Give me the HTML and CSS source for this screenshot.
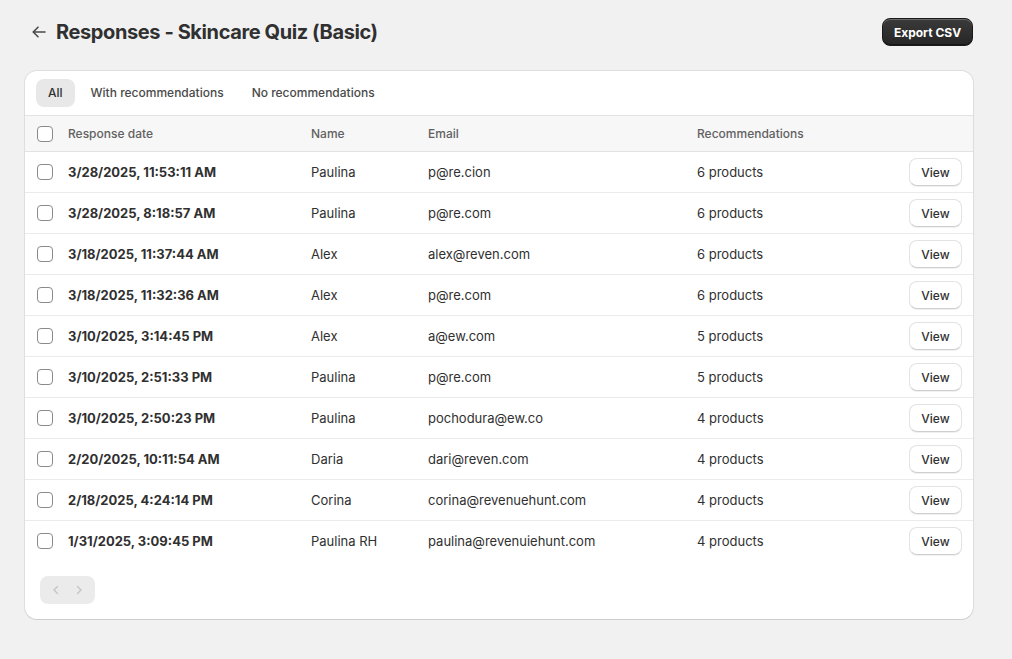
FILE: index.html
```html
<!DOCTYPE html>
<html>
<head>
<meta charset="utf-8">
<link rel="stylesheet" href="styles.css">
</head>
<body>
<div class="page">
  <div class="header">
    <div class="title-wrap">
      <button class="back" aria-label="Back">
        <svg width="20" height="20" viewBox="0 0 20 20"><path d="M16 10H4.5M9 5.2 4.2 10 9 14.8" fill="none" stroke="#4a4a4a" stroke-width="1.6" stroke-linecap="round" stroke-linejoin="round"/></svg>
      </button>
      <h1>Responses - Skincare Quiz (Basic)</h1>
    </div>
    <button class="primary">Export CSV</button>
  </div>

  <div class="card">
    <div class="tabs">
      <span class="tab active">All</span>
      <span class="tab">With recommendations</span>
      <span class="tab">No recommendations</span>
    </div>
    <div class="table">
      <div class="row head">
        <span class="cb"></span><span>Response date</span><span>Name</span><span>Email</span><span>Recommendations</span><span></span>
      </div>
      <div class="row"><span class="cb"></span><span class="date">3/28/2025, 11:53:11 AM</span><span>Paulina</span><span>p@re.cion</span><span>6 products</span><span class="act"><button class="view">View</button></span></div>
      <div class="row"><span class="cb"></span><span class="date">3/28/2025, 8:18:57 AM</span><span>Paulina</span><span>p@re.com</span><span>6 products</span><span class="act"><button class="view">View</button></span></div>
      <div class="row"><span class="cb"></span><span class="date">3/18/2025, 11:37:44 AM</span><span>Alex</span><span>alex@reven.com</span><span>6 products</span><span class="act"><button class="view">View</button></span></div>
      <div class="row"><span class="cb"></span><span class="date">3/18/2025, 11:32:36 AM</span><span>Alex</span><span>p@re.com</span><span>6 products</span><span class="act"><button class="view">View</button></span></div>
      <div class="row"><span class="cb"></span><span class="date">3/10/2025, 3:14:45 PM</span><span>Alex</span><span>a@ew.com</span><span>5 products</span><span class="act"><button class="view">View</button></span></div>
      <div class="row"><span class="cb"></span><span class="date">3/10/2025, 2:51:33 PM</span><span>Paulina</span><span>p@re.com</span><span>5 products</span><span class="act"><button class="view">View</button></span></div>
      <div class="row"><span class="cb"></span><span class="date">3/10/2025, 2:50:23 PM</span><span>Paulina</span><span>pochodura@ew.co</span><span>4 products</span><span class="act"><button class="view">View</button></span></div>
      <div class="row"><span class="cb"></span><span class="date">2/20/2025, 10:11:54 AM</span><span>Daria</span><span>dari@reven.com</span><span>4 products</span><span class="act"><button class="view">View</button></span></div>
      <div class="row"><span class="cb"></span><span class="date">2/18/2025, 4:24:14 PM</span><span>Corina</span><span>corina@revenuehunt.com</span><span>4 products</span><span class="act"><button class="view">View</button></span></div>
      <div class="row last"><span class="cb"></span><span class="date">1/31/2025, 3:09:45 PM</span><span>Paulina RH</span><span>paulina@revenuiehunt.com</span><span>4 products</span><span class="act"><button class="view">View</button></span></div>
    </div>
    <div class="pager">
      <div class="pager-group">
        <span class="pg"><svg width="12" height="12" viewBox="0 0 12 12"><path d="M7.5 2.5 4 6l3.5 3.5" fill="none" stroke="#c4c4c4" stroke-width="1.3" stroke-linecap="round" stroke-linejoin="round"/></svg></span>
        <span class="pg"><svg width="12" height="12" viewBox="0 0 12 12"><path d="M4.5 2.5 8 6 4.5 9.5" fill="none" stroke="#c4c4c4" stroke-width="1.3" stroke-linecap="round" stroke-linejoin="round"/></svg></span>
      </div>
    </div>
  </div>
</div>
</body>
</html>
```
FILE: styles.css
```css
* { box-sizing: border-box; }
html, body { margin: 0; padding: 0; }
body {
  background: #f1f1f1;
  font-family: Inter, "Noto Sans", sans-serif;
  color: #303030;
  font-size: 13px;
}
.page {
  padding: 18px 39px 40px 25px;
}
.header {
  display: flex;
  align-items: center;
  justify-content: space-between;
  height: 28px;
}
.title-wrap {
  display: flex;
  align-items: center;
  gap: 3px;
}
.back {
  width: 28px;
  height: 28px;
  border: 0;
  background: transparent;
  padding: 0;
  display: flex;
  align-items: center;
  justify-content: center;
}
h1 {
  margin: 0;
  font-size: 20px;
  font-weight: 700;
  letter-spacing: -0.4px;
  color: #303030;
  line-height: 28px;
}
.primary {
  font-family: inherit;
  font-size: 12px;
  font-weight: 650;
  color: #fff;
  background: linear-gradient(#3a3a3a, #262626);
  border: 1px solid #1a1a1a;
  border-radius: 8px;
  height: 28px;
  width: 91px;
  padding: 0;
  box-shadow: inset 0 1px 0 rgba(255,255,255,0.25), inset 0 -1px 0 rgba(0,0,0,0.4);
}
.card {
  margin-top: 25px;
  background: #fff;
  border-radius: 12px;
  box-shadow: 0 1px 0 rgba(0,0,0,0.07), 0 0 0 1px rgba(0,0,0,0.08);
  overflow: hidden;
}
.tabs {
  display: flex;
  gap: 4px;
  padding: 8px 11px 8px;
}
.tab {
  height: 28px;
  line-height: 28px;
  padding: 0 12px;
  border-radius: 8px;
  font-weight: 500;
  font-size: 12px;
  color: #4a4a4a;
}
.tab.active {
  background: #e8e8e8;
  color: #303030;
}
.row {
  display: grid;
  grid-template-columns: 31px 243px 117px 269px 1fr 75px;
  align-items: center;
  height: 41px;
  border-bottom: 1px solid #ebebeb;
  padding-left: 12px;
}
.row.last { border-bottom: 0; height: 41px; padding-bottom: 1px; }
.row.head {
  height: 37px;
  background: #f7f7f7;
  border-top: 1px solid #e3e3e3;
  border-bottom: 1px solid #e3e3e3;
  color: #616161;
  font-size: 12px;
  font-weight: 500;
}
.cb {
  width: 16px;
  height: 16px;
  border: 1px solid #8a8a8a;
  border-radius: 4px;
  background: #fff;
}
.date {
  font-weight: 700;
}
.act {
  display: flex;
  justify-content: flex-end;
  padding-right: 11px;
}
.view {
  font-family: inherit;
  font-size: 12px;
  font-weight: 550;
  color: #303030;
  background: #fff;
  border: 1px solid #e3e3e3;
  border-bottom-color: #cfcfcf;
  border-radius: 8px;
  height: 28px;
  width: 53px;
  padding: 0;
  box-shadow: 0 1px 0 rgba(0,0,0,0.06);
}
.pager {
  padding: 14px 15px 15px;
}
.pager-group {
  display: inline-flex;
  background: #ebebeb;
  border-radius: 8px;
  height: 28px;
  width: 55px;
  align-items: center;
  justify-content: space-around;
  padding: 0 4px;
}
.pg {
  display: flex;
  align-items: center;
  justify-content: center;
  width: 20px;
  height: 20px;
}
```
